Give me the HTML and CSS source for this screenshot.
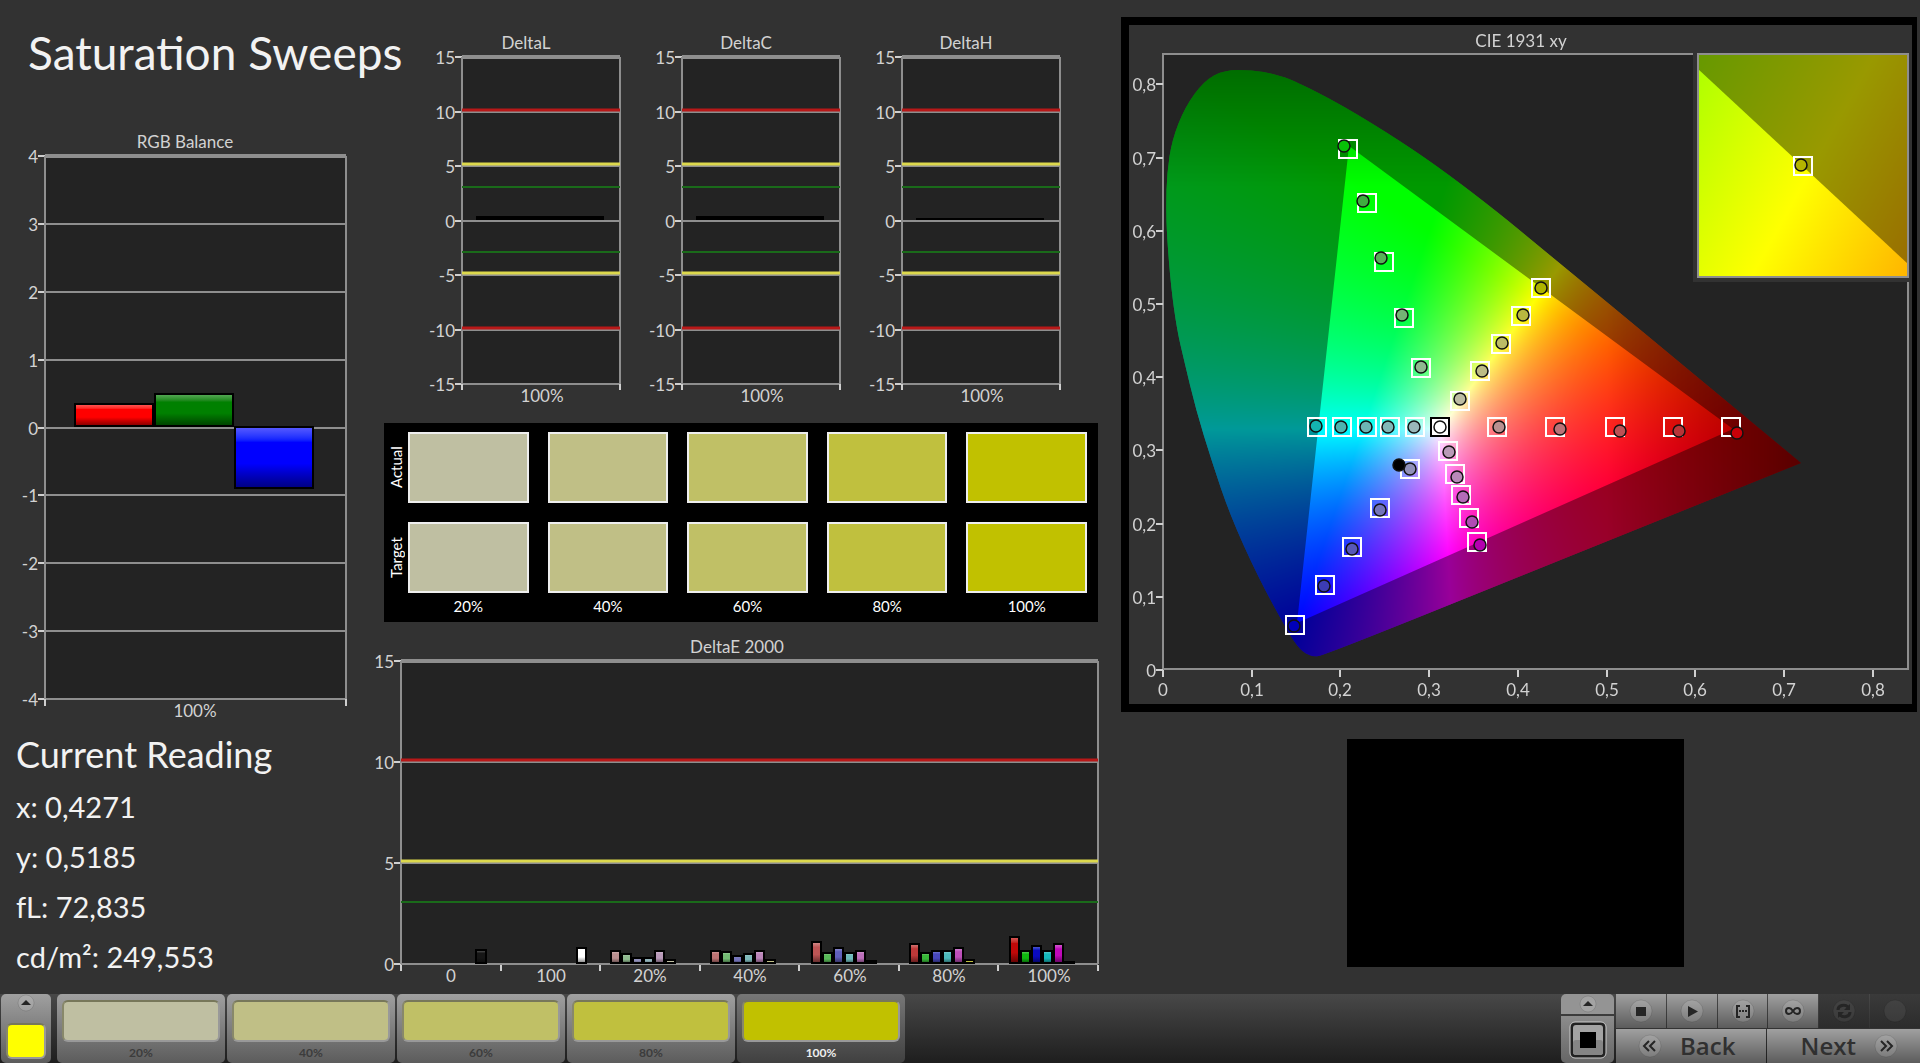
FILE: index.html
```html
<!DOCTYPE html>
<html lang="en">
<head>
    <meta charset="UTF-8">
    <meta name="viewport" content="width=device-width, initial-scale=1.0">
    <title>Saturation Sweeps</title>
    <link rel="stylesheet" href="styles.css">
</head>
<body>
    <main class="dashboard">
        <section class="left">
            <h1>Saturation Sweeps</h1>
            <svg id="rgbBalance" class="chart" viewBox="0 130 372 592"></svg>
            <div class="reading">
                <h2>Current Reading</h2>
                <p>x: 0,4271</p>
                <p>y: 0,5185</p>
                <p>fL: 72,835</p>
                <p>cd/m²: 249,553</p>
            </div>
        </section>

        <section class="middle">
            <div class="deltas">
                <svg id="deltaL" class="chart" viewBox="0 30 220 380"></svg>
                <svg id="deltaC" class="chart" viewBox="0 30 220 380"></svg>
                <svg id="deltaH" class="chart" viewBox="0 30 220 380"></svg>
            </div>
            <div class="swatches">
                <span class="side">Actual</span>
                <div class="cells">
                    <div class="swatch s20"></div>
                    <div class="swatch s40"></div>
                    <div class="swatch s60"></div>
                    <div class="swatch s80"></div>
                    <div class="swatch s100"></div>
                </div>
                <span class="side">Target</span>
                <div class="cells">
                    <div class="swatch s20"></div>
                    <div class="swatch s40"></div>
                    <div class="swatch s60"></div>
                    <div class="swatch s80"></div>
                    <div class="swatch s100"></div>
                </div>
                <div class="cells levels">
                    <span>20%</span>
                    <span>40%</span>
                    <span>60%</span>
                    <span>80%</span>
                    <span>100%</span>
                </div>
            </div>
            <svg id="deltaE" class="chart" viewBox="372 632 739 358"></svg>
        </section>

        <section class="right">
            <div class="cie">
                <canvas id="cieColors" width="783" height="679"></canvas>
                <svg id="cieChart" class="chart" viewBox="1129 25 783 679"></svg>
            </div>
            <div class="preview"></div>
        </section>
    </main>

    <footer class="toolbar">
        <button class="current" type="button" aria-label="Current color">
            <svg width="18" height="18" viewBox="0 0 18 18"><circle cx="9" cy="9" r="8" class="dimple"/><path d="M4 11l5-5 5 5z"/></svg>
            <span class="chip yellow"></span>
        </button>
        <div class="patches">
            <button class="patch" type="button"><span class="chip s20"></span>20%</button>
            <button class="patch" type="button"><span class="chip s40"></span>40%</button>
            <button class="patch" type="button"><span class="chip s60"></span>60%</button>
            <button class="patch" type="button"><span class="chip s80"></span>80%</button>
            <button class="patch active" type="button"><span class="chip s100"></span>100%</button>
        </div>
        <div class="window-size">
            <button class="up" type="button" aria-label="More">
                <svg width="18" height="18" viewBox="0 0 18 18"><circle cx="9" cy="9" r="8" class="dimple"/><path d="M4 11l5-5 5 5z"/></svg>
            </button>
            <button class="pattern" type="button" aria-label="Pattern window">
                <svg width="38" height="38" viewBox="0 0 38 38">
                    <rect x="1" y="1" width="36" height="36" rx="5" fill="#222" stroke="#ccc"/>
                    <rect x="4" y="4" width="30" height="30" rx="3" fill="#a4a4a4"/>
                    <rect x="4" y="19" width="30" height="15" rx="3" fill="#858585"/>
                    <rect x="11" y="11" width="16" height="16" fill="#000"/>
                </svg>
            </button>
        </div>
        <div class="controls">
            <div class="row">
                <button type="button" aria-label="Stop"><svg width="24" height="24" viewBox="0 0 24 24"><circle cx="12" cy="12" r="11" class="dimple"/><path d="M7 8h10v9H7z"/></svg></button>
                <button type="button" aria-label="Play"><svg width="24" height="24" viewBox="0 0 24 24"><circle cx="12" cy="12" r="11" class="dimple"/><path d="M8 7l10 5.500-10 5.500z"/></svg></button>
                <button type="button" aria-label="Series"><svg width="24" height="24" viewBox="0 0 24 24"><circle cx="12" cy="12" r="11" class="dimple"/><path d="M9 7H6v11h3M15 7h3v11h-3" class="line"/><path d="M8 11h2v2H8zM11 11h2v2h-2zM14 11h2v2h-2z"/></svg></button>
                <button type="button" aria-label="Continuous"><svg width="24" height="24" viewBox="0 0 24 24"><circle cx="12" cy="12" r="11" class="dimple"/><path d="M12 12c-2-3-3-3-4-3a3 3 0 0 0 0 6c1 0 2 0 4-3s3-3 4-3a3 3 0 0 1 0 6c-1 0-2 0-4-3z" class="line"/></svg></button>
                <button type="button" aria-label="Refresh" disabled><svg width="24" height="24" viewBox="0 0 24 24"><circle cx="12" cy="12" r="11" class="dimple"/><path d="M6 11c0-5 7-6 10-3M18 13c0 5-7 6-10 3" class="line thick"/><path d="M18 5v6h-6zM6 19v-6h6z"/></svg></button>
                <button type="button" aria-label="Record" disabled><svg width="24" height="24" viewBox="0 0 24 24"><circle cx="12" cy="12" r="11" class="dimple"/></svg></button>
            </div>
            <div class="row">
                <button class="nav" type="button"><svg width="24" height="24" viewBox="0 0 24 24"><circle cx="12" cy="12" r="11" class="dimple"/><path d="M11 7l-5 5 5 5M17 7l-5 5 5 5" class="line"/></svg>Back</button>
                <button class="nav next" type="button">Next<svg width="24" height="24" viewBox="0 0 24 24"><circle cx="12" cy="12" r="11" class="dimple"/><path d="M7 7l5 5-5 5M13 7l5 5-5 5" class="line"/></svg></button>
            </div>
        </div>
    </footer>

    <script src="charts.js"></script>
</body>
</html>
```
FILE: styles.css
```css
* {
    box-sizing: border-box;
}
body {
    margin: 0;
    min-height: 100vh;
    display: flex;
    flex-direction: column;
    background-color: #323232;
    color: #f2f2f2;
    font-family: Lato, "Open Sans", sans-serif;
}
.dashboard {
    flex: 1;
    display: grid;
    grid-template-columns: 372fr 739fr 809fr;
}
.dashboard > section {
    min-width: 0;
}
.chart {
    display: block;
    width: 100%;
    height: auto;
}
h1 {
    margin: 24px 0 48px 28px;
    font-size: 46px;
    line-height: 58px;
    font-weight: 400;
    white-space: nowrap;
}
.reading {
    margin: 10px 0 0 16px;
}
.reading h2 {
    margin: 0 0 6px;
    font-size: 36px;
    line-height: 44px;
    font-weight: 400;
}
.reading p {
    margin: 0;
    font-size: 29px;
    line-height: 50px;
}

/* charts */
.chart text {
    font-size: 17px;
    fill: #d2d2d2;
}
.plot {
    fill: #232323;
}
.axis {
    stroke: #8e8e8e;
    stroke-width: 2;
}
.axis.top {
    stroke-width: 4;
}
.tick {
    stroke: #cfcfcf;
    stroke-width: 2;
}
.limit {
    stroke-width: 3;
}
.red { stroke: #b81818; }
.yel { stroke: #dcd84c; }
.grn {
    stroke: #1a6a1a;
    stroke-width: 2;
}
.bar {
    stroke: #000;
    stroke-width: 2;
}
.deltas {
    display: grid;
    grid-template-columns: repeat(3, 1fr);
    margin: 30px 31px 13px 48px;
}

/* colour comparison */
.swatches {
    display: grid;
    grid-template-columns: 24px 1fr;
    row-gap: 19px;
    margin: 0 13px 10px 12px;
    padding: 9px 11px 3px 0;
    background-color: #000;
    color: #fff;
    font-size: 15px;
}
.cells {
    display: grid;
    grid-template-columns: repeat(5, 1fr);
    column-gap: 19px;
}
.side {
    writing-mode: vertical-rl;
    transform: rotate(180deg);
    text-align: center;
    line-height: 24px;
}
.swatch {
    height: 71px;
    border: 2px solid #eee;
}
.levels {
    grid-column: 2;
    margin-top: -19px;
    line-height: 26px;
    text-align: center;
}
.s20 { background-color: #bfbfa2; }
.s40 { background-color: #c0bf86; }
.s60 { background-color: #c0c066; }
.s80 { background-color: #c0c03e; }
.s100 { background-color: #c1c100; }
.yellow { background-color: #ff0; }

/* CIE diagram */
.cie {
    display: grid;
    margin: 17px 3px 27px 10px;
    border: 8px solid #000;
    border-right-width: 5px;
}
.cie > * {
    grid-area: 1 / 1;
    width: 100%;
    height: auto;
}
.target {
    fill: none;
    stroke: #fff;
    stroke-width: 2;
}
.target.white {
    fill: #fff;
    stroke: #000;
}
.measured {
    stroke: #111;
    stroke-width: 1.5;
}
.preview {
    width: 337px;
    height: 228px;
    margin: 0 auto;
    background-color: #000;
}

/* toolbar */
.toolbar {
    display: flex;
    height: 69px;
    background: linear-gradient(#484848, #1e1e1e);
}
button {
    margin: 0;
    padding: 0;
    border: 0;
    font-family: inherit;
    color: #333;
    background: linear-gradient(#a0a0a0, #5c5c5c);
    cursor: pointer;
}
button svg {
    display: block;
    fill: #252525;
}
.dimple {
    fill: #fff;
    fill-opacity: 0.14;
    stroke: #000;
    stroke-opacity: 0.12;
}
.line {
    fill: none;
    stroke: #252525;
    stroke-width: 2;
}
.thick {
    stroke-width: 3;
}
.current {
    width: 50px;
    margin-right: 6px;
    margin-left: 1px;
    padding: 0 5px 4px;
    border-radius: 5px;
    display: flex;
    flex-direction: column;
    justify-content: space-between;
    align-items: center;
}
.chip {
    display: block;
    width: 100%;
    height: 42px;
    border: 2px solid #999;
    border-top-color: #77775a;
    border-left-color: #88886a;
    border-radius: 6px;
}
.current .chip {
    height: 36px;
}
.patches {
    flex: 1;
    display: flex;
    gap: 2px;
}
.patch {
    width: 168px;
    padding: 5px 5px 0;
    border-radius: 5px;
    font-size: 12px;
    line-height: 21px;
    font-weight: 700;
    color: #3c3c3c;
}
.patch.active {
    background: linear-gradient(#777, #404040);
    color: #eee;
}
.window-size {
    width: 53px;
    margin-right: 2px;
    display: flex;
    flex-direction: column;
    gap: 2px;
}
.window-size button {
    display: flex;
    justify-content: center;
    align-items: center;
}
.up {
    height: 20px;
    border-radius: 5px 5px 0 0;
    background: #949494;
}
.pattern {
    flex: 1;
    border-radius: 0 0 5px 5px;
    background: linear-gradient(#8c8c8c, #666);
}
.controls {
    width: 304px;
    display: flex;
    flex-direction: column;
    gap: 1px;
}
.row {
    flex: 1;
    display: flex;
    gap: 1px;
}
.row button {
    flex: 1;
    display: flex;
    justify-content: center;
    align-items: center;
}
.row button:disabled {
    background: linear-gradient(#3a3a3a, #2c2c2c);
}
.row button:disabled .dimple {
    fill-opacity: 0.06;
}
.row .nav {
    gap: 18px;
    padding-right: 8px;
    font-family: "Open Sans", sans-serif;
    font-size: 24px;
    line-height: 30px;
    font-weight: 600;
    color: #303030;
}
.row .next {
    padding: 0 0 0 12px;
}
```
FILE: charts.js
```js
function add(parent, name, attrs, text) {
    var el = document.createElementNS('http://www.w3.org/2000/svg', name);
    for (var key in attrs) {
        el.setAttribute(key, attrs[key]);
    }
    if (text !== undefined) {
        el.textContent = text;
    }
    parent.appendChild(el);
    return el;
}

function line(svg, x1, y1, x2, y2, cls) {
    add(svg, 'line', {x1: x1, y1: y1, x2: x2, y2: y2, 'class': cls});
}

function label(svg, x, y, text, anchor) {
    add(svg, 'text', {x: x, y: y, 'text-anchor': anchor || 'middle'}, text);
}

// Glossy fill for a bar: light at the top edge, dark at the bottom
function glossy(svg, id, color) {
    var g = add(svg, 'linearGradient', {id: id, x1: 0, y1: 0, x2: 0, y2: 1});
    add(g, 'stop', {offset: 0, 'stop-color': 'color-mix(in srgb, ' + color + ', white 35%)'});
    add(g, 'stop', {offset: 0.25, 'stop-color': color});
    add(g, 'stop', {offset: 0.6, 'stop-color': color});
    add(g, 'stop', {offset: 1, 'stop-color': 'color-mix(in srgb, ' + color + ', black 50%)'});
}

function bar(svg, id, x, y, w, h, color) {
    glossy(svg, id, color);
    add(svg, 'rect', {x: x, y: y, width: w, height: h, fill: 'url(#' + id + ')', 'class': 'bar'});
}

// Plot area with value axis; returns the function value -> y
function frame(svg, o) {
    var scale = function (v) {
        return o.top + (o.max - v) * (o.bottom - o.top) / (o.max - o.min);
    };
    add(svg, 'rect', {x: o.left, y: o.top, width: o.right - o.left, height: o.bottom - o.top, 'class': 'plot'});
    for (var v = o.min; v <= o.max; v += o.step) {
        var y = Math.round(scale(v));
        line(svg, o.left, y, o.right, y, v === o.max ? 'axis top' : 'axis');
        line(svg, o.left - 7, y, o.left, y, 'tick');
        label(svg, o.left - 7, y + 7, v, 'end');
    }
    line(svg, o.left, o.top, o.left, o.bottom, 'axis');
    line(svg, o.right, o.top, o.right, o.bottom, 'axis');
    label(svg, o.titleX, o.top - 8, o.title);
    return scale;
}

function limits(svg, o, scale, values) {
    values.forEach(function (v) {
        var cls = {10: 'red', 5: 'yel', 3: 'grn'}[Math.abs(v)];
        var y = Math.round(scale(v)) - (cls === 'grn' ? 1 : 2);
        line(svg, o.left, y, o.right, y, 'limit ' + cls);
    });
}

// RGB balance
var rgb = document.getElementById('rgbBalance');
frame(rgb, {left: 45, right: 346, top: 156, bottom: 699, min: -4, max: 4, step: 1, title: 'RGB Balance', titleX: 185});
line(rgb, 45, 699, 45, 706, 'tick');
line(rgb, 346, 699, 346, 706, 'tick');
label(rgb, 195, 717, '100%');
bar(rgb, 'balR', 75, 404, 78, 22, '#ff0000');
bar(rgb, 'balG', 155, 394, 78, 32, '#008000');
bar(rgb, 'balB', 235, 427, 78, 61, '#0000ff');

// Delta L / C / H
[['deltaL', 'DeltaL', 4], ['deltaC', 'DeltaC', 4], ['deltaH', 'DeltaH', 2]].forEach(function (d) {
    var svg = document.getElementById(d[0]);
    var o = {left: 42, right: 200, top: 57, bottom: 384, min: -15, max: 15, step: 5, title: d[1], titleX: 106};
    var scale = frame(svg, o);
    limits(svg, o, scale, [10, 5, 3, -3, -5, -10]);
    add(svg, 'rect', {x: 56, y: 220 - d[2], width: 128, height: d[2]});
    line(svg, 42, 384, 42, 390, 'tick');
    line(svg, 200, 384, 200, 390, 'tick');
    label(svg, 122, 402, '100%');
});

// Delta E 2000
var de = document.getElementById('deltaE');
var deFrame = {left: 401, right: 1098, top: 661, bottom: 964, min: 0, max: 15, step: 5, title: 'DeltaE 2000', titleX: 737};
var deScale = frame(de, deFrame);
limits(de, deFrame, deScale, [10, 5, 3]);
var groups = ['0', '100', '20%', '40%', '60%', '80%', '100%'];
groups.forEach(function (name, i) {
    label(de, 451 + i * 100 - Math.round(i / 3), 982, name);
});
for (var i = 0; i <= 7; i++) {
    var tx = Math.round(401 + i * 697 / 7);
    line(de, tx, 965, tx, 971, 'tick');
}
bar(de, 'de0', 476, 950, 10, 13, '#161616');
bar(de, 'de100', 577, 948, 9, 15, '#ffffff');
var series = [
    {x: 610, h: [12, 9, 5, 5, 12, 3], c: ['#b98f8f', '#8fba8f', '#9090b9', '#92b3ba', '#b99ab9', '#bfbfa2']},
    {x: 710, h: [12, 11, 7, 9, 12, 3], c: ['#bb7272', '#72ba72', '#7474ba', '#7fb9ba', '#bb85b9', '#c0bf86']},
    {x: 811, h: [21, 10, 15, 10, 12, 2], c: ['#bd5555', '#58b958', '#6060bb', '#6db9ba', '#bc6fba', '#c0c066']},
    {x: 909, h: [19, 10, 12, 12, 15, 3], c: ['#be3838', '#38b838', '#4747bb', '#4bb9ba', '#bd4fba', '#c0c03e']},
    {x: 1009, h: [26, 12, 17, 12, 19, 1], c: ['#c00808', '#10b810', '#0a0abf', '#14b8ba', '#bf08ba', '#111100']}
];
series.forEach(function (s, n) {
    s.h.forEach(function (h, k) {
        bar(de, 'de' + n + '_' + k, s.x + 1 + k * 11, 963 - h, 9, h, s.c[k]);
    });
});

// CIE 1931 colours
var locus = [[1801, 463], [1563, 559], [1325, 655], [1312, 657], [1300, 650], [1288, 632], [1258, 577], [1230, 515],
    [1212, 462], [1196, 410], [1184, 360], [1177, 330], [1171, 287], [1167, 237], [1166, 207], [1167, 173],
    [1172, 140], [1185, 107], [1204, 81], [1224, 70], [1252, 70], [1275, 74], [1295, 81], [1342, 105],
    [1402, 142], [1448, 174], [1500, 214], [1535, 243], [1687, 368]];
var canvas = document.getElementById('cieColors');
var ctx = canvas.getContext('2d');
var off = document.createElement('canvas');
off.width = canvas.width;
off.height = canvas.height;
var octx = off.getContext('2d');
var img = octx.createImageData(off.width, off.height);
for (var py = 0; py < off.height; py++) {
    for (var px = 0; px < off.width; px++) {
        var x = (px + 1129 - 1163) / 887;
        var y = Math.max((669 - py - 25) / 732, 0.001);
        var X = x / y, Z = (1 - x - y) / y;
        var r = Math.max(0, 3.2406 * X - 1.5372 - 0.4986 * Z);
        var g = Math.max(0, -0.9689 * X + 1.8758 + 0.0415 * Z);
        var b = Math.max(0, 0.0557 * X - 0.204 + 1.057 * Z);
        var m = Math.max(r, g, b);
        // fade towards the deep reds and greens
        var f = 1 - Math.max(0, x - 0.5) * 1.9 - Math.max(0, y - 0.66) * 1.8;
        var p = (py * off.width + px) * 4;
        img.data[p] = 255 * r / m * f;
        img.data[p + 1] = 255 * g / m * f;
        img.data[p + 2] = 255 * b / m * f;
        img.data[p + 3] = 255;
    }
}
octx.putImageData(img, 0, 0);

ctx.translate(-1129, -25);
ctx.fillStyle = '#232323';
ctx.fillRect(1163, 54, 745, 615);
ctx.save();
ctx.beginPath();
ctx.moveTo(locus[0][0], locus[0][1]);
for (var n = 1; n < locus.length - 1; n++) {
    ctx.quadraticCurveTo(locus[n][0], locus[n][1], (locus[n][0] + locus[n + 1][0]) / 2, (locus[n][1] + locus[n + 1][1]) / 2);
}
ctx.lineTo(locus[0][0], locus[0][1]);
ctx.clip();
ctx.drawImage(off, 1129, 25);
ctx.beginPath();
ctx.rect(1129, 25, 783, 679);
ctx.moveTo(1349, 146);
ctx.lineTo(1733, 429);
ctx.lineTo(1297, 623);
ctx.closePath();
ctx.fillStyle = 'rgba(0, 0, 0, 0.4)';
ctx.fill('evenodd');
ctx.restore();

// CIE axes
var cie = document.getElementById('cieChart');
label(cie, 1521, 47, 'CIE 1931 xy');
line(cie, 1163, 54, 1909, 54, 'axis');
line(cie, 1163, 53, 1163, 670, 'axis');
line(cie, 1163, 669, 1909, 669, 'axis');
line(cie, 1908, 54, 1908, 669, 'axis');
for (var t = 0; t <= 8; t++) {
    var name = t ? '0,' + t : '0';
    var yy = Math.round(670 - t * 73.2);
    var xx = Math.round(1163 + t * 88.7);
    line(cie, 1156, yy, 1163, yy, 'tick');
    label(cie, 1156, yy + 7, name, 'end');
    line(cie, xx, 670, xx, 677, 'tick');
    label(cie, xx, 696, name);
}

// [square x, y, circle x, y, colour]
var points = [
    [1348, 149, 1344, 146, '#08c008'], [1367, 203, 1363, 201, '#3fae3f'], [1384, 262, 1381, 258, '#58b058'],
    [1404, 318, 1402, 315, '#74b474'], [1421, 368, 1421, 367, '#90b890'],
    [1541, 288, 1541, 288, '#aeb400'], [1521, 316, 1523, 315, '#b8b840'], [1501, 344, 1502, 343, '#bcbc66'],
    [1480, 371, 1482, 371, '#bcbc86'], [1460, 401, 1460, 399, '#bcbca2'],
    [1317, 427, 1316, 426, '#14b4b0'], [1342, 427, 1341, 427, '#4cb4b0'], [1367, 427, 1366, 427, '#6cb6b4'],
    [1390, 427, 1388, 427, '#82b8b8'], [1415, 427, 1414, 427, '#9ab8ba'],
    [1497, 427, 1499, 427, '#b99090'], [1555, 427, 1560, 429, '#bb7278'], [1615, 427, 1620, 431, '#bd5055'],
    [1673, 427, 1679, 431, '#b83438'], [1731, 427, 1737, 433, '#c80008'],
    [1410, 469, 1410, 469, '#9090b9'], [1380, 508, 1380, 510, '#7474ba'], [1352, 547, 1352, 549, '#5858b8'],
    [1325, 585, 1324, 586, '#3c3cb4'], [1295, 625, 1294, 626, '#0000b8'],
    [1448, 451, 1449, 452, '#b99ab9'], [1455, 474, 1457, 477, '#b988b9'], [1461, 495, 1463, 497, '#b46cb8'],
    [1469, 518, 1472, 522, '#b04cb4'], [1477, 542, 1480, 545, '#b400b0']
];
function square(x, y, cls) {
    add(cie, 'rect', {x: x - 9, y: y - 9, width: 18, height: 18, 'class': cls});
}
function dot(x, y, color) {
    add(cie, 'circle', {cx: x, cy: y, r: 6, fill: color, 'class': 'measured'});
}
points.forEach(function (q) {
    square(q[0], q[1], 'target');
    dot(q[2], q[3], q[4]);
});
square(1440, 427, 'target white');
dot(1440, 427, '#fff');
dot(1399, 465, '#000');

// Zoomed inset around the current reading
var zoom = add(cie, 'linearGradient', {id: 'zoom', gradientUnits: 'userSpaceOnUse', x1: 1697, y1: 54, x2: 1954, y2: 197});
add(zoom, 'stop', {offset: 0, 'stop-color': '#aaff00'});
add(zoom, 'stop', {offset: 0.53, 'stop-color': '#ffff00'});
add(zoom, 'stop', {offset: 1, 'stop-color': '#ffb400'});
add(cie, 'rect', {x: 1693, y: 50, width: 219, height: 232, fill: '#323232'});
add(cie, 'rect', {x: 1698, y: 55, width: 210, height: 222, fill: 'url(#zoom)'});
add(cie, 'path', {d: 'M1698 69L1908 264V55H1698z', fill: '#000', 'fill-opacity': 0.4});
add(cie, 'rect', {x: 1698, y: 54, width: 210, height: 223, fill: 'none', 'class': 'axis'});
square(1803, 166, 'target');
dot(1801, 165, '#b4b400');
```
